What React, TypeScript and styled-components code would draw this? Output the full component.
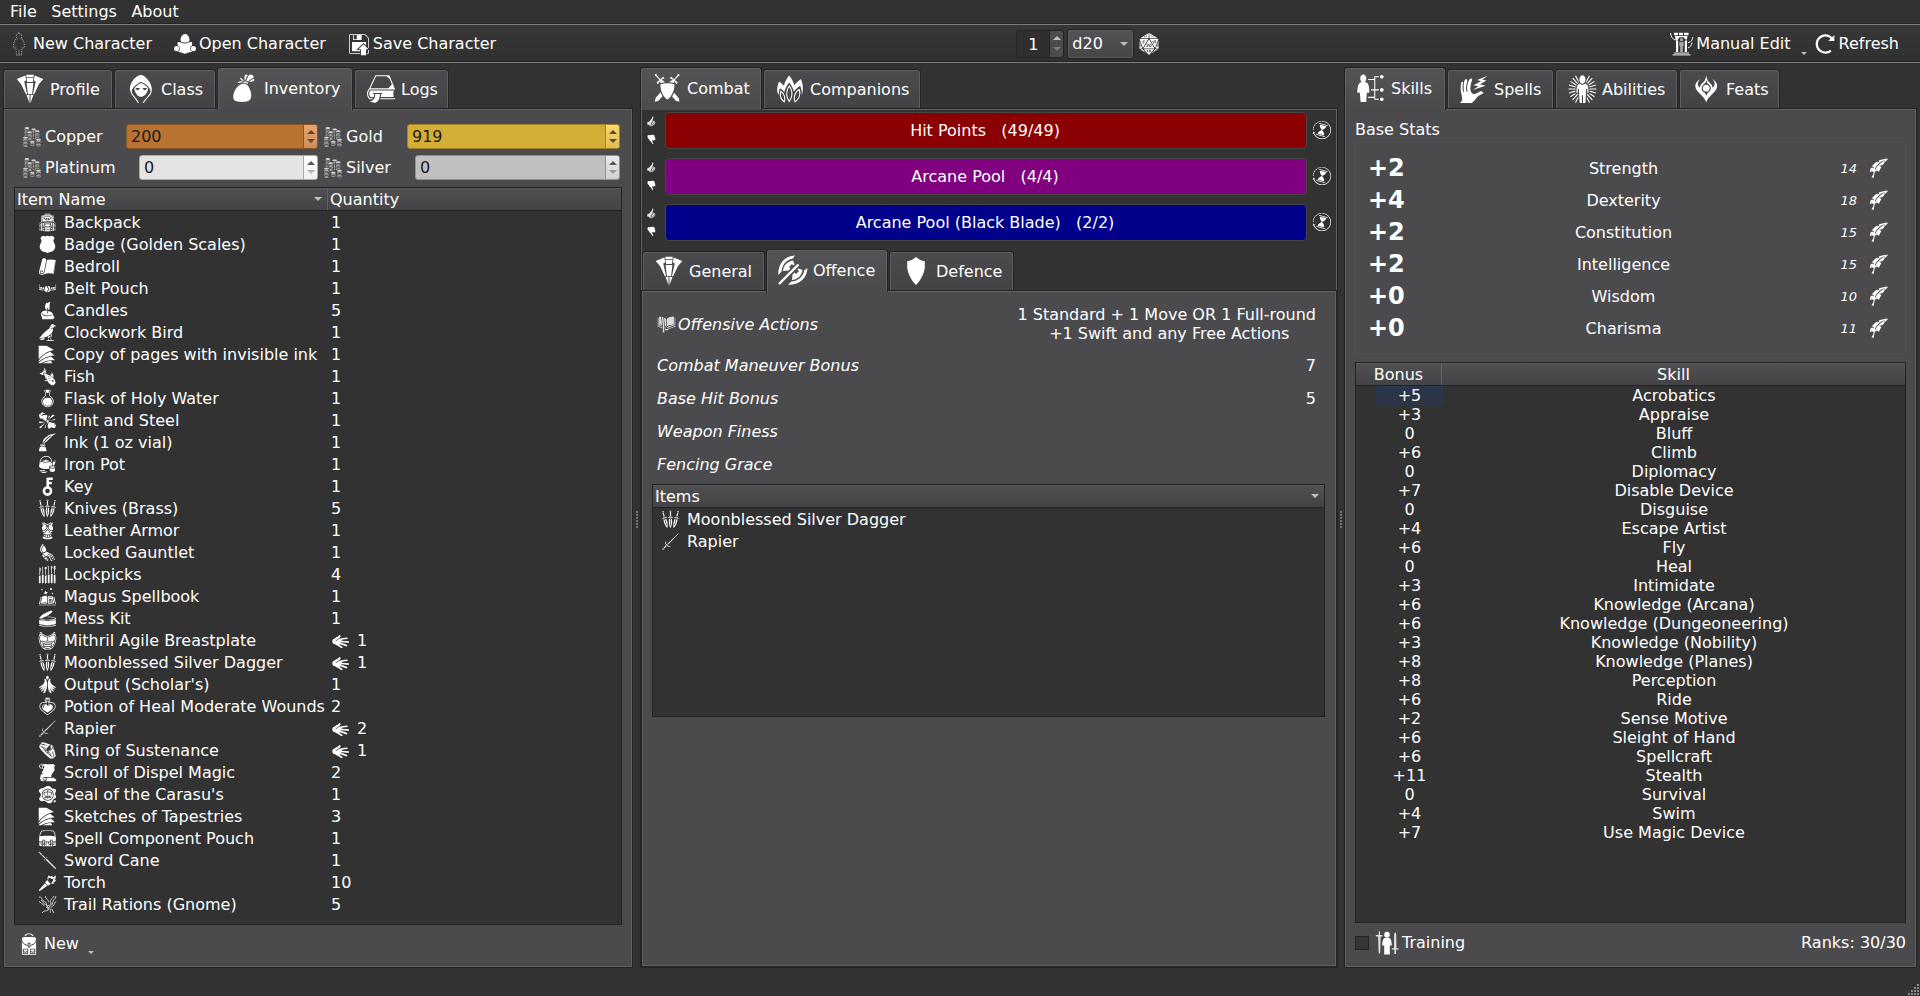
import React from 'react';
import styled, { createGlobalStyle } from 'styled-components';
import type { IconType } from 'react-icons';
import {
  GiInvisible, GiRead, GiSave, GiCowled, GiSwapBag, GiBookmark, GiCoins, GiBackpack, GiPoliceBadge,
  GiRolledCloth, GiBeltArmor, GiCandleFlame, GiEgyptianBird, GiPapers, GiFriedFish, GiRoundBottomFlask,
  GiFlintSpark, GiQuillInk, GiTeapotLeaves, GiDaggers, GiLeatherArmor, GiGauntlet, GiLockpicks,
  GiSpellBook, GiOpenedFoodCan, GiSaiyanSuit, GiWingCloak, GiHealthPotion, GiStiletto, GiPowerRing,
  GiScrollUnfurled, GiWaxSeal, GiHandBag, GiTwoHandedSword, GiTorch, GiHand, GiLightBackpack,
  GiDiceTwentyFacesTwenty, GiSwordsEmblem, GiPawFront, GiShield, GiThumbUp, GiThumbDown,
  GiDuration, GiBookmarklet, GiClockwiseRotation, GiSkills, GiBoltSpellCast, GiBeamsAura, GiAlienFire,
  GiQuill,
} from 'react-icons/gi';

const GlobalStyle = createGlobalStyle`
  * { box-sizing: border-box; }
  html, body { margin: 0; padding: 0; background: #323232; overflow: hidden; }
  body { font: 16px/19px "DejaVu Sans", Verdana, sans-serif; color: #fff; cursor: default; }
  svg { display: block; flex: none; }
`;

const Window = styled.div`
  width: 1920px; height: 996px; display: flex; flex-direction: column;
  background: #323232; white-space: nowrap;
`;
const MenuBar = styled.nav`
  height: 25px; display: flex; gap: 14.5px; padding: 2px 10px 0; border-bottom: 1px solid #7c7c7c;
  box-shadow: inset 0 -1px 0 #242424;
`;
const ToolBar = styled.header`
  height: 38px; display: flex; align-items: center; padding: 0 21px 0 7px;
  background: linear-gradient(#373737, #303030); border-bottom: 1px solid #7c7c7c;
  box-shadow: inset 0 -1px 0 #242424;
`;
const ToolButton = styled.div<{ $gap?: number; $after?: number }>`
  display: flex; align-items: center; gap: ${p => p.$gap ?? 2}px; margin-right: ${p => p.$after ?? 0}px;
`;
const Spring = styled.div`flex: 1;`;
const Triangle = styled.i<{ $up?: boolean; $color?: string; $size?: number }>`
  display: block; width: 0; height: 0; flex: none;
  border: ${p => p.$size ?? 4}px solid transparent;
  ${p => (p.$up ? 'border-top' : 'border-bottom')}-width: 0;
  ${p => (p.$up ? 'border-bottom' : 'border-top')}-color: ${p => p.$color ?? '#c0c0c0'};
`;
const MenuMark = styled.div`align-self: flex-end; padding: 0 6px 7px 0;`;
const DiceTools = styled.div`display: flex; align-items: center; gap: 3px; margin-right: 509px;`;
const DiceCount = styled.div`
  width: 48px; height: 28px; display: flex; border: 1px solid #252525; border-radius: 3px; background: #2f2f2f; overflow: hidden;
`;
const DiceCountValue = styled.div`width: 34px; padding: 4px 0 0 11px;`;
const Steps = styled.div<{ $bg: string; $edge: string }>`
  flex: none; width: 14px; display: flex; flex-direction: column; align-items: center; justify-content: space-around;
  padding: 2px 0; background: ${p => p.$bg}; border-left: 1px solid ${p => p.$edge};
`;
const Combo = styled.div`
  width: 67px; height: 30px; display: flex; align-items: center; justify-content: space-between; padding: 0 5px 0 4px;
  border: 1px solid #232323; border-radius: 3px; background: linear-gradient(#535355, #464648); box-shadow: inset 0 0 0 1px #5c5c5e;
`;

const Columns = styled.main`height: 905px; display: flex; padding: 4px 3px 0;`;
const Column = styled.section<{ $w: number }>`width: ${p => p.$w}px; display: flex; flex-direction: column;`;
const Splitter = styled.div<{ $w: number }>`
  width: ${p => p.$w}px; display: flex; flex-direction: column; align-items: center; gap: 1px; padding-top: 444px;
`;
const Dot = styled.i`width: 2px; height: 2px; background: #707070;`;

const TabBar = styled.div<{ $pad?: number }>`
  display: flex; align-items: flex-end; gap: 1px; height: 41px; padding-left: ${p => p.$pad ?? 0}px;
`;
const Tab = styled.div<{ $w: number; $on?: boolean }>`
  width: ${p => p.$w}px; height: ${p => (p.$on ? 43 : 39)}px; margin-bottom: ${p => (p.$on ? -2 : 0)}px;
  position: relative; z-index: ${p => (p.$on ? 1 : 0)};
  display: flex; align-items: center; gap: 5px; padding: 0 0 ${p => (p.$on ? 2 : 0)}px 11px;
  border: 1px solid #252525; border-bottom: 0; border-radius: 3px 3px 0 0;
  background: ${p => (p.$on ? 'linear-gradient(#545456, #4b4b4d)' : 'linear-gradient(#4b4b4d, #434345)')};
  box-shadow: inset 1px 1px 0 #5e5e60, inset -1px 0 0 #5e5e60;
`;
const Page = styled.div<{ $dark?: boolean }>`
  flex: 1; min-height: 0; display: flex; flex-direction: column;
  border: 1px solid #252525; box-shadow: inset 0 0 0 1px #606062;
  background: ${p => (p.$dark ? '#323232' : '#4b4b4d')};
`;

const Purse = styled.div`
  display: grid; grid-template-columns: 297px 298px; column-gap: 4px; row-gap: 6px; padding: 15px 0 0 17px;
`;
const CoinRow = styled.div`height: 25px; display: flex; align-items: center;`;
const CoinLabel = styled.div`flex: 1; padding-left: 2px;`;
const CoinInput = styled.div<{ $w: number; $bg: string; $edge: string }>`
  width: ${p => p.$w}px; height: 25px; display: flex; color: #1a1a1a; border: 1px solid ${p => p.$edge};
  border-radius: 3px; background: ${p => p.$bg}; overflow: hidden;
`;
const CoinValue = styled.div`flex: 1; padding: 2px 0 0 4px;`;

const Table = styled.div<{ $margin: string; $h: number }>`
  height: ${p => p.$h}px; margin: ${p => p.$margin}; border: 1px solid #232323; background: #323232;
`;
const TableHead = styled.div`
  height: 23px; display: flex; border-bottom: 1px solid #232323;
  background: linear-gradient(#505052, #444446); box-shadow: inset 0 1px 0 #5c5c5e;
`;
const HeadCell = styled.div<{ $w?: number; $center?: boolean }>`
  ${p => (p.$w ? `width: ${p.$w}px; border-right: 1px solid #626264;` : 'flex: 1;')}
  display: flex; align-items: center; justify-content: ${p => (p.$center ? 'center' : 'space-between')};
  padding: 0 ${p => (p.$center ? 0 : 5)}px 0 ${p => (p.$center ? 0 : 2)}px;
`;
const ItemRow = styled.div<{ $indent: number }>`
  height: 22px; display: flex; align-items: center; padding-left: ${p => p.$indent}px;
`;
const ItemIcon = styled.div`width: 26px;`;
const ItemName = styled.div`width: 267px;`;
const Equipped = styled.div`
  width: 26px;
  svg { transform: translateY(1px) scaleY(.75) rotate(78deg); }
`;
const NewItem = styled.div`display: flex; align-items: center; padding: 6px 0 0 13px; gap: 3px; height: 31px;`;
const NewMark = styled.div`padding: 18px 0 0 6px;`;

const Pools = styled.div`padding-top: 2px; height: 140px;`;
const Pool = styled.div`height: 46px; display: flex; align-items: center; padding: 0 5px 8px 4px;`;
const Thumbs = styled.div`width: 20px; display: flex; flex-direction: column; align-items: center; gap: 7px; padding-right: 7px;`;
const PoolBar = styled.div<{ $bg: string }>`
  flex: 1; height: 37px; display: flex; align-items: center; justify-content: center; white-space: pre;
  border: 1px solid #454545; border-radius: 4px; background: ${p => p.$bg}; padding-right: 2px;
`;
const PoolReset = styled.div`padding-left: 5px;`;
const Facts = styled.dl`margin: 0; padding: 10px 20px 0 15px; height: 193px; font-style: italic;`;
const Fact = styled.div<{ $tall?: boolean }>`
  height: ${p => (p.$tall ? 46 : 33)}px; margin-bottom: ${p => (p.$tall ? 2 : 0)}px;
  display: flex; align-items: center; gap: 2px;
`;
const FactValue = styled.div`margin-left: auto; font-style: normal; text-align: center; white-space: pre;`;

const GroupTitle = styled.div`padding: 11px 0 0 10px; height: 32px;`;
const StatBox = styled.div`
  height: 214px; margin: 0 10px 7px; padding: 10px 0 0; border: 1px solid #525254; border-radius: 3px;
`;
const Stat = styled.div`height: 32px; display: grid; grid-template-columns: 60px 1fr 52px 36px; align-items: center; padding-left: 12px;`;
const StatBonus = styled.b`font-size: 24px; line-height: 30px;`;
const StatName = styled.div`text-align: center; padding-left: 2px;`;
const StatScore = styled.i`font-size: 13px; text-align: right; padding-right: 12px;`;
const SkillRow = styled.div`height: 19px; display: flex; padding-left: 20px;`;
const SkillBonus = styled.div<{ $sel?: boolean }>`
  width: 67px; text-align: center; border-radius: 2px;
  ${p => p.$sel && 'background: linear-gradient(#2b3549, #2e3443); box-shadow: inset 0 0 0 1px #293750;'}
`;
const SkillName = styled.div`flex: 1; text-align: center;`;
const SkillFoot = styled.div`display: flex; align-items: center; padding: 9px 10px 0; height: 30px;`;
const CheckBox = styled.i`width: 14px; height: 14px; background: #353535; border: 1px solid #252525; margin-right: 6px;`;
const StatusBar = styled.footer`flex: 1; display: flex; justify-content: flex-end; align-items: flex-end;`;

const KeyIcon: IconType = ({ size }) => (
  <svg width={size} height={size} viewBox="0 0 18 18" fill="none" stroke="currentColor">
    <circle cx="9" cy="13.3" r="3.4" strokeWidth="2.4" />
    <path d="M9.2 10V.6M9 1.7h5M9 5.6h4" strokeWidth="2.4" />
  </svg>
);
const RationsIcon: IconType = ({ size }) => (
  <svg width={size} height={size} viewBox="0 0 18 18" fill="none" stroke="currentColor" strokeWidth=".9" opacity=".8">
    <path d="M1 2c3-1 2 3 5 4s1 4 4 6 1 4 2 5M3 5c3 1 1 3 4 4s1 4 3 5M7 1c0 3 3 3 3 6M17 1c0 3-3 3-3 6s-4 3-4 6-5 1-6 4M15 1c-1 3-4 3-3 6s-4 3-4 5M1 6c2 1 3 3 5 4M17 6c-2 3-2 4-5 6M13 13l2 4" />
  </svg>
);
/* Broad-shouldered robe with a high collar, tapering to a point */
const RobeIcon: IconType = ({ size }) => (
  <svg width={size} height={size} viewBox="0 0 30 30" fill="currentColor">
    <path d="M11.4.7h7.2v2.2h-7.2zM11.4 3.8h7.2l-.8 4.2h-5.6z" />
    <path d="M10.4 1.6L1.7 5l3.2 3.8 1.2 1.4 4.8 10h1.2L9.2 7.6l1.9-1.2z" />
    <path d="M19.6 1.6L28.3 5l-3.2 3.8-1.2 1.4-4.8 10h-1.2l2.9-12.6-1.9-1.2z" />
    <path d="M11.6 8.9h6.8l-1.3 11.3h-4.2zM11.6 21h2.9v8.2zM18.4 21h-2.9v8.2z" />
  </svg>
);
const TwinAxeIcon: IconType = ({ size }) => (
  <svg width={size} height={size} viewBox="0 0 30 30" fill="currentColor">
    <path d="M17 .5C7 1 0 8 .3 20L3.6 16.600C4 9.500 9 4.600 14.600 3.800Z" />
    <path d="M15 5.500C9.500 6.500 5.500 10 5 16L10.500 15.500 12.500 13.500 11 12 14 9 15.500 10.500 16.500 9.500Z" />
    <path d="M29.500 13C29 23 22 30 10 29.700L13.400 26.400C20.500 26 25.400 21 26.200 15.400Z" />
    <path d="M24.500 15C23.500 20.500 20 24.500 14 25L14.500 19.500 16.500 17.500 18 19 21 16 19.500 14.500 20.500 13.500Z" />
    <path d="M1 29L20.500 9.500" stroke="currentColor" strokeWidth="2.400" />
  </svg>
);
const PortalIcon: IconType = ({ size }) => (
  <svg width={size} height={size} viewBox="0 0 24 24" fill="currentColor">
    <path d="M4 .8h4v2.400H4zM9 .8h4v2.400H9zM14 .8h4.500v2.400H14zM5 4h12.500l-.6 3.500h-1.400L13.500 5.200h-4L7.200 8.500H5.600z" />
    <path d="M6 8.500h2.200V20H6zM14.800 8.500H17V20h-2.200z" />
    <path d="M11.500 6a1.700 1.700 0 0 1 0 3.400 1.700 1.700 0 0 1 0-3.400zM9.300 10h4.400v4l-.8.500V20h-2.800v-5.500l-.8-.5z" opacity=".55" />
    <path d="M4 20.600h15v1.200H4zM2.500 22.300h18v1.200h-18z" opacity=".75" />
    <path d="M.6 1c.4 4 2 6 4.600 7M22.800 5c-.4 4-2.200 5-4.800 5.600M22 10.500c-.4 3-1.600 4.500-4 5.400" fill="none" stroke="currentColor" strokeWidth="1" />
  </svg>
);
const TrainingIcon: IconType = ({ size }) => (
  <svg width={size} height={size} viewBox="0 0 24 24" fill="currentColor">
    <path d="M12 .8a2.800 3 0 0 1 0 6 2.800 3 0 0 1 0-6zM9.600 7h4.800c1.700 1 2.400 4 2.400 7.500h-2V23.500h-5.600V14.500h-2c0-3.500.700-6.500 2.400-7.500z" />
    <path d="M3.800 .5h1.200v3.500h2.400v1.400H5.600L5.200 21l-.8 2-.8-2-.4-15.600H.8V4h3z" opacity=".85" />
    <path d="M20.200 .8l1 2.500.2 14h2.200v1.300h-2.600V23h-1.600v-4.400h-2.600v-1.300h2.200l.2-14z" opacity=".85" />
  </svg>
);

type Item = [string, IconType, string, boolean?];
const items: Item[] = [
  ['Backpack', GiBackpack, '1'], ['Badge (Golden Scales)', GiPoliceBadge, '1'], ['Bedroll', GiRolledCloth, '1'],
  ['Belt Pouch', GiBeltArmor, '1'], ['Candles', GiCandleFlame, '5'], ['Clockwork Bird', GiEgyptianBird, '1'],
  ['Copy of pages with invisible ink', GiPapers, '1'], ['Fish', GiFriedFish, '1'],
  ['Flask of Holy Water', GiRoundBottomFlask, '1'], ['Flint and Steel', GiFlintSpark, '1'],
  ['Ink (1 oz vial)', GiQuillInk, '1'], ['Iron Pot', GiTeapotLeaves, '1'], ['Key', KeyIcon, '1'],
  ['Knives (Brass)', GiDaggers, '5'], ['Leather Armor', GiLeatherArmor, '1'], ['Locked Gauntlet', GiGauntlet, '1'],
  ['Lockpicks', GiLockpicks, '4'], ['Magus Spellbook', GiSpellBook, '1'], ['Mess Kit', GiOpenedFoodCan, '1'],
  ['Mithril Agile Breastplate', GiSaiyanSuit, '1', true], ['Moonblessed Silver Dagger', GiDaggers, '1', true],
  ["Output (Scholar's)", GiWingCloak, '1'], ['Potion of Heal Moderate Wounds', GiHealthPotion, '2'],
  ['Rapier', GiStiletto, '2', true], ['Ring of Sustenance', GiPowerRing, '1', true],
  ['Scroll of Dispel Magic', GiScrollUnfurled, '2'], ["Seal of the Carasu's", GiWaxSeal, '1'],
  ['Sketches of Tapestries', GiPapers, '3'], ['Spell Component Pouch', GiHandBag, '1'],
  ['Sword Cane', GiTwoHandedSword, '1'], ['Torch', GiTorch, '10'], ['Trail Rations (Gnome)', RationsIcon, '5'],
];
const stats = [
  ['+2', 'Strength', '14'], ['+4', 'Dexterity', '18'], ['+2', 'Constitution', '15'],
  ['+2', 'Intelligence', '15'], ['+0', 'Wisdom', '10'], ['+0', 'Charisma', '11'],
];
const skills = [
  ['+5', 'Acrobatics'], ['+3', 'Appraise'], ['0', 'Bluff'], ['+6', 'Climb'], ['0', 'Diplomacy'],
  ['+7', 'Disable Device'], ['0', 'Disguise'], ['+4', 'Escape Artist'], ['+6', 'Fly'], ['0', 'Heal'],
  ['+3', 'Intimidate'], ['+6', 'Knowledge (Arcana)'], ['+6', 'Knowledge (Dungeoneering)'],
  ['+3', 'Knowledge (Nobility)'], ['+8', 'Knowledge (Planes)'], ['+8', 'Perception'], ['+6', 'Ride'],
  ['+2', 'Sense Motive'], ['+6', 'Sleight of Hand'], ['+6', 'Spellcraft'], ['+11', 'Stealth'],
  ['0', 'Survival'], ['+4', 'Swim'], ['+7', 'Use Magic Device'],
];
const pools = [
  ['Hit Points   (49/49)', '#8b0000'], ['Arcane Pool   (4/4)', '#800080'], ['Arcane Pool (Black Blade)   (2/2)', '#00008b'],
];

interface CoinProps { name: string; value: string; w: number; bg: string; edge: string; btn: string; mark?: string; low?: string }
const Coin = ({ name, value, w, bg, edge, btn, mark = '#5a4a3c', low }: CoinProps) => (
  <CoinRow>
    <GiCoins size={22} opacity={0.75} />
    <CoinLabel>{name}</CoinLabel>
    <CoinInput $w={w} $bg={bg} $edge={edge}>
      <CoinValue>{value}</CoinValue>
      <Steps $bg={btn} $edge={edge}><Triangle $up $color={mark} /><Triangle $color={low ?? mark} /></Steps>
    </CoinInput>
  </CoinRow>
);

const Grip = ({ w }: { w: number }) => (
  <Splitter $w={w}>{[0, 1, 2, 3, 4, 5].map(i => <Dot key={i} />)}</Splitter>
);

export default function App() {
  return (
    <Window>
      <GlobalStyle />
      <MenuBar><span>File</span><span>Settings</span><span>About</span></MenuBar>
      <ToolBar>
        <ToolButton $after={21}><GiInvisible size={24} opacity={0.7} />New Character</ToolButton>
        <ToolButton $after={21}><GiRead size={24} />Open Character</ToolButton>
        <ToolButton><GiSave size={24} />Save Character</ToolButton>
        <Spring />
        <DiceTools>
          <DiceCount>
            <DiceCountValue>1</DiceCountValue>
            <Steps $bg="#4c4c4e" $edge="#252525"><Triangle $up /><Triangle $color="#7a7a7a" /></Steps>
          </DiceCount>
          <Combo>d20<Triangle /></Combo>
          <ToolButton $gap={0}><GiDiceTwentyFacesTwenty size={24} /></ToolButton>
        </DiceTools>
        <ToolButton $after={10}><PortalIcon size={24} />Manual Edit</ToolButton>
        <MenuMark><Triangle $size={3} /></MenuMark>
        <ToolButton><GiClockwiseRotation size={24} />Refresh</ToolButton>
      </ToolBar>

      <Columns>
        <Column $w={630}>
          <TabBar>
            <Tab $w={110}><RobeIcon size={30} />Profile</Tab>
            <Tab $w={102}><GiCowled size={30} />Class</Tab>
            <Tab $w={136} $on><GiSwapBag size={30} />Inventory</Tab>
            <Tab $w={95}><GiBookmark size={30} />Logs</Tab>
          </TabBar>
          <Page>
            <Purse>
              <Coin name="Copper" value="200" w={192} bg="#b87333" edge="#8a5727" btn="linear-gradient(#e8a56d, #cf8f58)" />
              <Coin name="Gold" value="919" w={213} bg="#d4af37" edge="#9e8329" btn="linear-gradient(#fadb6e, #dfbb52)" />
              <Coin name="Platinum" value="0" w={179} bg="#e5e4e2" edge="#ababaa" btn="linear-gradient(#fff, #efefef)" mark="#555" low="#b5b5b5" />
              <Coin name="Silver" value="0" w={205} bg="#c0c0c0" edge="#909090" btn="linear-gradient(#ebebeb, #d0d0d0)" mark="#555" low="#999" />
            </Purse>
            <Table $margin="7px 10px 0 10px" $h={738}>
              <TableHead>
                <HeadCell $w={313}>Item Name<Triangle /></HeadCell>
                <HeadCell>Quantity</HeadCell>
              </TableHead>
              {items.map(([name, Icon, qty, worn]) => (
                <ItemRow key={name} $indent={23}>
                  <ItemIcon><Icon size={19} /></ItemIcon>
                  <ItemName>{name}</ItemName>
                  {worn && <Equipped><GiHand size={19} /></Equipped>}
                  {qty}
                </ItemRow>
              ))}
            </Table>
            <NewItem><GiLightBackpack size={24} />New<NewMark><Triangle $size={3} /></NewMark></NewItem>
          </Page>
        </Column>

        <Grip w={7} />

        <Column $w={698}>
          <TabBar>
            <Tab $w={122} $on><GiSwordsEmblem size={30} />Combat</Tab>
            <Tab $w={158}><GiPawFront size={30} />Companions</Tab>
          </TabBar>
          <Page $dark>
            <Pools>
              {pools.map(([label, color]) => (
                <Pool key={label}>
                  <Thumbs><GiThumbUp size={11} opacity={0.85} /><GiThumbDown size={11} /></Thumbs>
                  <PoolBar $bg={color}>{label}</PoolBar>
                  <PoolReset><GiDuration size={20} /></PoolReset>
                </Pool>
              ))}
            </Pools>
            <TabBar $pad={1}>
              <Tab $w={123}><RobeIcon size={30} />General</Tab>
              <Tab $w={122} $on><TwinAxeIcon size={30} />Offence</Tab>
              <Tab $w={125}><GiShield size={30} />Defence</Tab>
            </TabBar>
            <Page>
              <Facts>
                <Fact $tall>
                  <GiBookmarklet size={19} opacity={0.8} />Offensive Actions
                  <FactValue>{'1 Standard + 1 Move OR 1 Full-round\n +1 Swift and any Free Actions'}</FactValue>
                </Fact>
                <Fact>Combat Maneuver Bonus<FactValue>7</FactValue></Fact>
                <Fact>Base Hit Bonus<FactValue>5</FactValue></Fact>
                <Fact>Weapon Finess</Fact>
                <Fact>Fencing Grace</Fact>
              </Facts>
              <Table $margin="0 11px 0 10px" $h={233}>
                <TableHead><HeadCell>Items<Triangle /></HeadCell></TableHead>
                <ItemRow $indent={8}><ItemIcon><GiDaggers size={19} /></ItemIcon>Moonblessed Silver Dagger</ItemRow>
                <ItemRow $indent={8}><ItemIcon><GiStiletto size={19} /></ItemIcon>Rapier</ItemRow>
              </Table>
            </Page>
          </Page>
        </Column>

        <Grip w={6} />

        <Column $w={573}>
          <TabBar>
            <Tab $w={102} $on><GiSkills size={30} />Skills</Tab>
            <Tab $w={107}><GiBoltSpellCast size={30} />Spells</Tab>
            <Tab $w={123}><GiBeamsAura size={30} />Abilities</Tab>
            <Tab $w={101}><GiAlienFire size={30} />Feats</Tab>
          </TabBar>
          <Page>
            <GroupTitle>Base Stats</GroupTitle>
            <StatBox>
              {stats.map(([bonus, name, score]) => (
                <Stat key={name}>
                  <StatBonus>{bonus}</StatBonus><StatName>{name}</StatName><StatScore>{score}</StatScore><GiQuill size={20} />
                </Stat>
              ))}
            </StatBox>
            <Table $margin="0 10px" $h={561}>
              <TableHead><HeadCell $w={86} $center>Bonus</HeadCell><HeadCell $center>Skill</HeadCell></TableHead>
              {skills.map(([bonus, name], i) => (
                <SkillRow key={name}><SkillBonus $sel={i === 0}>{bonus}</SkillBonus><SkillName>{name}</SkillName></SkillRow>
              ))}
            </Table>
            <SkillFoot>
              <CheckBox /><ToolButton $gap={3}><TrainingIcon size={24} />Training</ToolButton>
              <Spring />Ranks: 30/30
            </SkillFoot>
          </Page>
        </Column>
      </Columns>
      <StatusBar>
        <svg width="12" height="12" viewBox="0 0 12 12" fill="#8a8a8a">
          <path d="M9 0h2v2H9zM6 3h2v2H6zM9 3h2v2H9zM3 6h2v2H3zM6 6h2v2H6zM9 6h2v2H9zM0 9h2v2H0zM3 9h2v2H3zM6 9h2v2H6zM9 9h2v2H9z" />
        </svg>
      </StatusBar>
    </Window>
  );
}
